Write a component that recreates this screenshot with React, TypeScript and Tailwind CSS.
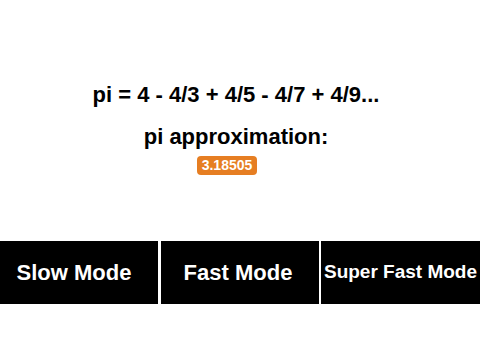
import { useState } from 'react';

const modes = ['Slow Mode', 'Fast Mode', 'Super Fast Mode'];

export default function App() {
  const [value] = useState('3.18505');

  return (
    <div className="h-[360px] w-[480px] bg-white font-['Liberation_Sans',Arial,sans-serif] font-bold">
      <div className="flex flex-col items-center pr-[8px] pt-[81px]">
        <h1 className="text-[22px] leading-[27px] text-black">pi = 4 - 4/3 + 4/5 - 4/7 + 4/9...</h1>
        <h2 className="mt-[15px] text-[22px] leading-[27px] text-black">pi approximation:</h2>
        <span className="mr-[18px] mt-[6px] rounded-[4px] bg-[#e67e22] px-[5px] text-[14px] leading-[19px] text-white">
          {value}
        </span>
      </div>
      <div className="mt-[66px] flex h-[63px] gap-[2px]">
        {modes.map((m, i) => (
          <button
            key={m}
            className={
              'flex items-center justify-center bg-black text-white ' +
              (i === 0 ? 'w-[158px] pr-[10px] text-[22px]' : i === 1 ? 'ml-[1px] w-[158px] pr-[4px] text-[22px]' : 'flex-1 text-[19px]')
            }
          >
            {m}
          </button>
        ))}
      </div>
    </div>
  );
}
